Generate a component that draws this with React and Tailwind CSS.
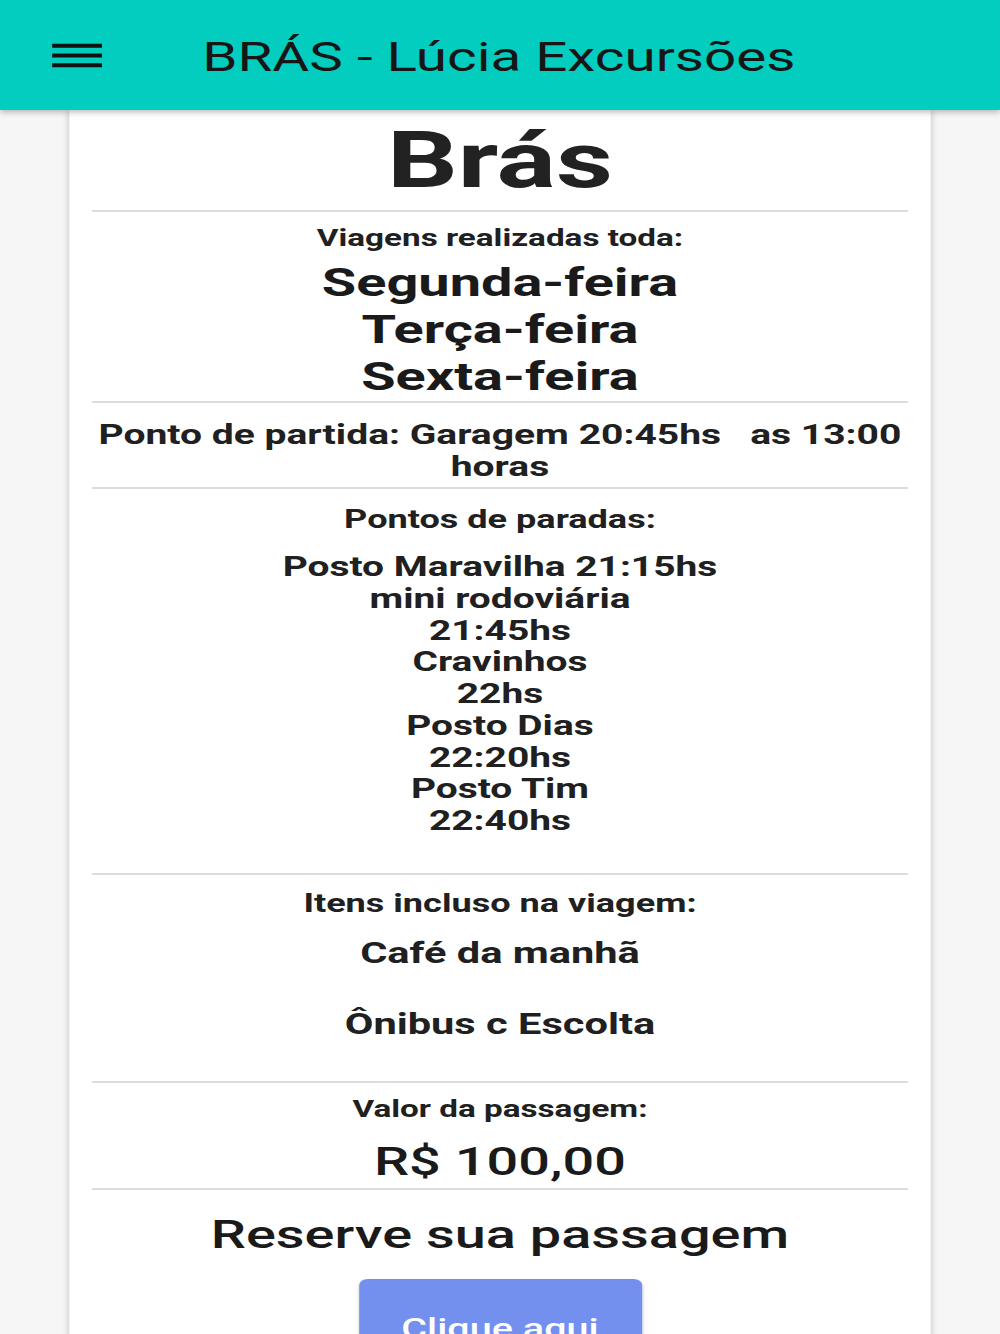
import React from 'react';

// The reference is a phone screenshot stretched sideways, so the page is laid out
// on a 707px-wide canvas and widened to 1000px with a horizontal scale.

const stops = [
    'Posto Maravilha 21:15hs',
    'mini rodoviária',
    '21:45hs',
    'Cravinhos',
    '22hs',
    'Posto Dias',
    '22:20hs',
    'Posto Tim',
    '22:40hs',
];

function Divider({ className = '' }) {
    return <div className={`h-[2px] bg-[#dcdcdc] ${className}`} />;
}

function MenuIcon() {
    return (
        <svg width="47" height="47" viewBox="0 0 24 24" fill="#111">
            <path d="M3 18h18v-2H3v2zm0-5h18v-2H3v2zm0-7v2h18V6H3z" />
        </svg>
    );
}

export default function App() {
    return (
        <div className="h-screen w-full overflow-hidden bg-[#f6f6f6]">
            <div className="w-[707px] origin-top-left scale-x-[1.4144] font-['Roboto','Liberation_Sans',sans-serif] text-[#202020]">
                <header className="relative z-10 flex h-[110px] items-center bg-[#03cdbf] pl-[31px] shadow-[0_2px_5px_rgba(0,0,0,0.28)]">
                    <MenuIcon />
                    <h1 className="ml-[65px] mt-[5px] text-[40px] font-normal leading-none text-[#161616]">
                        BRÁS - Lúcia Excursões
                    </h1>
                </header>

                <main className="mx-[49px] min-h-[1300px] bg-white px-[16px] text-center shadow-[0_0_6px_rgba(0,0,0,0.22)]">
                    <h2 className="pt-[9.5px] text-[78.5px] font-bold leading-[80px] text-[#222]">Brás</h2>
                    <Divider className="mt-[10.5px]" />

                    <p className="mt-[12px] text-[23.5px] font-bold leading-[28px]">Viagens realizadas toda:</p>
                    <div className="mt-[7px] text-[39.5px] font-bold leading-[47px] text-[#1a1a1a]">
                        <p>Segunda-feira</p>
                        <p>Terça-feira</p>
                        <p>Sexta-feira</p>
                    </div>
                    <Divider className="mt-[1px]" />

                    <p className="-mx-[8px] mt-[15.75px] text-[27.6px] font-bold leading-[32.5px]">
                        Ponto de partida: Garagem 20:45hs{'\u00a0\u00a0'} as 13:00 horas
                    </p>
                    <Divider className="mt-[3.25px]" />

                    <p className="mt-[15px] text-[25.5px] font-bold leading-[30px]">Pontos de paradas:</p>
                    <div className="mt-[17.1px] text-[27.5px] font-bold leading-[31.75px]">
                        {stops.map((s) => (
                            <p key={s}>{s}</p>
                        ))}
                    </div>
                    <Divider className="mt-[35.8px]" />

                    <p className="mt-[13.3px] text-[25.5px] font-bold leading-[30px]">Itens incluso na viagem:</p>
                    <p className="mt-[19px] text-[29.4px] font-bold leading-[32px]">Café da manhã</p>
                    <p className="mt-[39px] text-[29.4px] font-bold leading-[32px]">Ônibus c Escolta</p>
                    <Divider className="mt-[40.7px]" />

                    <p className="mt-[12.3px] text-[23.5px] font-bold leading-[28px]">Valor da passagem:</p>
                    <p className="mt-[17.5px] text-[39.5px] font-medium leading-[44px] text-[#1a1a1a]">R$ 100,00</p>
                    <Divider className="mt-[4px]" />

                    <h3 className="mt-[22.5px] text-[39.5px] font-medium leading-[44px] text-[#1a1a1a]">
                        Reserve sua passagem
                    </h3>
                    <button className="mx-auto mt-[22px] flex h-[100px] w-[200px] items-center justify-center rounded-[6px] bg-[#7390ee] text-[28px] font-medium text-white shadow-[0_2px_3px_rgba(0,0,0,0.2)]">
                        Clique aqui
                    </button>
                </main>
            </div>
        </div>
    );
}
